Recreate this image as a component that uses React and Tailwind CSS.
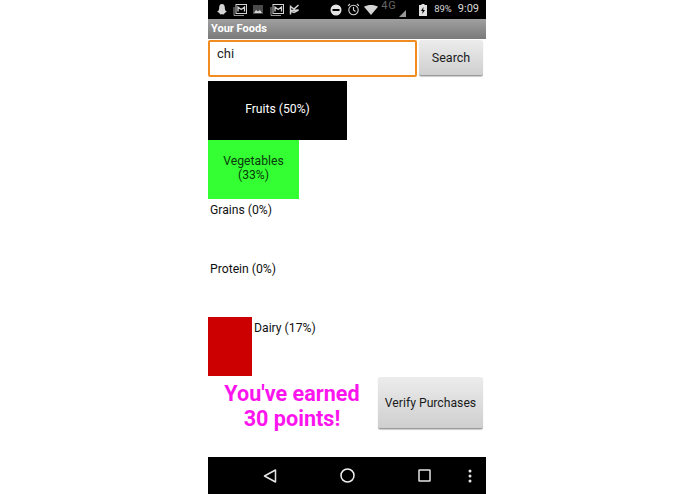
const FONT = { fontFamily: "Roboto, 'Liberation Sans', sans-serif" };

function MailIcon() {
  return (
    <svg width="14" height="12" viewBox="0 0 14 12" className="mr-[5px]" fill="none" stroke="#d4d4d4">
      <path d="M1 3V11.500H11" strokeOpacity="0.700" />
      <rect x="3" y="0.500" width="10.500" height="9" />
      <path d="M5 7.500V3L8.200 5.500L11.500 3V7.500" strokeWidth="1.300" />
    </svg>
  );
}

function StatusBar() {
  return (
    <div className="h-[19px] bg-black flex items-center text-[#d8d8d8] text-[9.500px] pl-[9px] pr-[7px]">
      {/* notification icons */}
      <svg width="10" height="11" viewBox="0 0 10 11" className="mr-[6px]" fill="#d4d4d4">
        <path d="M5 0C2.800 0 2.200 2 2.200 3.500C2.200 6 1.500 7 0 7.800L2 8.800L3.300 10.500C4.300 10 5.700 10 6.700 10.500L8 8.800L10 7.800C8.500 7 7.800 6 7.800 3.500C7.800 2 7.200 0 5 0Z" />
      </svg>
      <MailIcon />
      <svg width="12" height="11" viewBox="0 0 12 11" className="mr-[6px]" fill="#d4d4d4">
        <rect x="1" y="1" width="10" height="9" fillOpacity="0.350" />
        <path d="M2 9L4 6L6 7.500L8 6L10 9Z" />
      </svg>
      <MailIcon />
      <svg width="11" height="12" viewBox="0 0 11 12" fill="none" stroke="#d4d4d4" strokeWidth="1.500">
        <path d="M1.500 1.500V10.500M1.500 2.500L5 5L9.500 1M1.500 6.500L9.500 6L5 8.500L1.500 7" />
      </svg>

      <div className="ml-auto flex items-center">
        <svg width="12" height="12" viewBox="0 0 12 12" className="mr-[5px]">
          <circle cx="6" cy="6" r="5.500" fill="#e5e5e5" />
          <rect x="2.500" y="5" width="7" height="2" fill="#000" />
        </svg>
        <svg width="13" height="13" viewBox="0 0 13 13" className="mr-[4px]" fill="none" stroke="#d4d4d4" strokeWidth="1.100">
          <circle cx="6.500" cy="7" r="4.700" />
          <path d="M6.500 4V7L8.500 8.500M1 2.800L3 1M12 2.800L10 1" />
        </svg>
        <svg width="14" height="10" viewBox="0 0 14 10" className="mr-[3px]" fill="#d4d4d4">
          <path d="M0 1.800C4 -0.600 10 -0.600 14 1.800L7 10Z" />
        </svg>
        <div className="relative w-[25px] h-[15px] mr-[13px]">
          <span className="absolute left-0 top-[-3px] text-[11px] tracking-[1px] text-[#666] leading-[14px]">4G</span>
          <svg width="7" height="7" viewBox="0 0 7 7" className="absolute right-0 bottom-0" fill="#999">
            <path d="M7 0V7H0Z" />
          </svg>
        </div>
        <svg width="8" height="12" viewBox="0 0 8 12" className="mr-[7px]" fill="#e0e0e0">
          <path d="M2.500 0H5.500V1H8V12H0V1H2.500Z" />
          <path d="M4.500 3L2 7H3.700L3.200 10L6 6H4.200Z" fill="#000" />
        </svg>
        <span className="mr-[6px]">89%</span>
        <span className="text-[11px]">9:09</span>
      </div>
    </div>
  );
}

function FoodBar({ label, width, color, textColor = "text-black", inline = false }) {
  return (
    <div className="h-[59px] flex items-start">
      {width > 0 && (
        <div
          className={`h-full ${color} flex ${inline ? "" : "items-center justify-center text-center px-[8px] pb-[3px]"} ${textColor}`}
          style={{ width }}
        >
          {!inline && <span className="leading-[14px]">{label}</span>}
        </div>
      )}
      {inline && <span className="pl-[2px] pt-[4px] leading-[14px]">{label}</span>}
    </div>
  );
}

function GreyButton({ children, className }) {
  return (
    <button className={`rounded-[2px] pt-[2px] bg-gradient-to-b from-[#ececec] to-[#cfcfcf] border-b border-[#9a9a9a] shadow-[0_1px_1px_rgba(0,0,0,0.200)] text-[#1a1a1a] ${className}`}>
      {children}
    </button>
  );
}

export default function App() {
  return (
    <div className="w-[695px] h-[494px] bg-white flex justify-center" style={FONT}>
      <div className="w-[278px] h-full ml-[-1px] flex flex-col text-[12.200px] text-[#111]">
        <StatusBar />

        {/* Title */}
        <div className="h-[20px] bg-gradient-to-b from-[#a0a0a0] to-[#7a7a7a] text-white font-bold text-[11px] leading-[20px] px-[3px]">
          Your Foods
        </div>

        {/* Search row */}
        <div className="flex h-[42px] pt-[1px] pb-[3px]">
          <div className="w-[209px] h-[37px] border-2 border-[#f08c20] rounded-[2px] text-[13px] text-[#222] pl-[7px] pt-[2px]">
            chi
          </div>
          <GreyButton className="w-[64px] h-[36px] ml-[2px] text-[12.500px]">Search</GreyButton>
        </div>

        {/* Food group bars */}
        <div className="flex flex-col">
          <FoodBar label="Fruits (50%)" width={139} color="bg-black" textColor="text-white" />
          <FoodBar label="Vegetables (33%)" width={91} color="bg-[#33ff33]" textColor="text-[#0a3a0a]" />
          <FoodBar label="Grains (0%)" width={0} inline />
          <FoodBar label="Protein (0%)" width={0} inline />
          <FoodBar label="Dairy (17%)" width={44} color="bg-[#cc0000]" inline />
        </div>

        {/* Points and verify */}
        <div className="flex h-[81px] pt-[1px]">
          <div className="w-[168px] mr-[2px] pt-[4px] text-center text-[#fb14ee] text-[21.600px] leading-[25px] font-bold">
            You've earned
            <br />
            30 points!
          </div>
          <GreyButton className="w-[105px] h-[52px] text-[12.200px]">Verify Purchases</GreyButton>
        </div>

        {/* Nav bar */}
        <div className="h-[37px] bg-black flex items-center">
          <svg width="14" height="14" viewBox="0 0 14 14" className="ml-[55px]" fill="none" stroke="#e5e5e5" strokeWidth="1.500">
            <path d="M12.500 1L1.500 7L12.500 13Z" strokeLinejoin="round" />
          </svg>
          <svg width="15" height="15" viewBox="0 0 15 15" className="ml-[63px]" fill="none" stroke="#f0f0f0" strokeWidth="1.500">
            <circle cx="7.500" cy="7.500" r="6.500" />
          </svg>
          <svg width="13" height="13" viewBox="0 0 13 13" className="ml-[63px]" fill="none" stroke="#e5e5e5" strokeWidth="1.500">
            <rect x="1" y="1" width="11" height="11" rx="0.500" />
          </svg>
          <svg width="4" height="14" viewBox="0 0 4 14" className="ml-[37px]" fill="#e5e5e5">
            <circle cx="2" cy="2" r="1.500" />
            <circle cx="2" cy="7" r="1.500" />
            <circle cx="2" cy="12" r="1.500" />
          </svg>
        </div>
      </div>
    </div>
  );
}
